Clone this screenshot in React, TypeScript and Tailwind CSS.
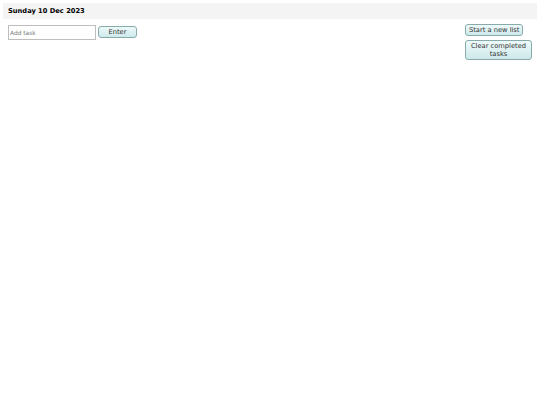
export default function App() {
  return (
    <div className="min-h-screen bg-white p-[3px] font-['DejaVu_Sans',sans-serif] text-black">
      {/* Date header */}
      <div className="bg-[#f4f4f4] h-[16px] flex items-center px-[5px]">
        <h1 className="text-[6.7px] font-bold leading-none">Sunday 10 Dec 2023</h1>
      </div>

      <div className="flex justify-between mt-[5px]">
        {/* Add task form */}
        <div className="flex items-start gap-[2px] pl-[5px] pt-[1px]">
          <input
            type="text"
            placeholder="Add task"
            className="w-[88px] h-[15px] border border-[#bdbdbd] bg-white px-[1px] text-[5.9px] placeholder:text-[#7a7a7a] outline-none"
          />
          <button className="mt-[1px] w-[39px] h-[12px] rounded-[3px] border border-[#8aa] bg-gradient-to-b from-[#eefafa] to-[#cde9eb] text-[6.7px] leading-none text-[#333]">
            Enter
          </button>
        </div>

        {/* List actions */}
        <div className="flex flex-col items-start gap-[4px] pr-[5px]">
          <button className="h-[12px] px-[3px] rounded-[3px] border border-[#8aa] bg-gradient-to-b from-[#eefafa] to-[#cde9eb] text-[6.7px] leading-none text-[#333]">
            Start a new list
          </button>
          <button className="w-[67px] h-[20px] px-[3px] rounded-[3px] border border-[#8aa] bg-gradient-to-b from-[#eefafa] to-[#cde9eb] text-[6.7px] leading-[8px] text-[#333]">
            Clear completed tasks
          </button>
        </div>
      </div>
    </div>
  );
}
